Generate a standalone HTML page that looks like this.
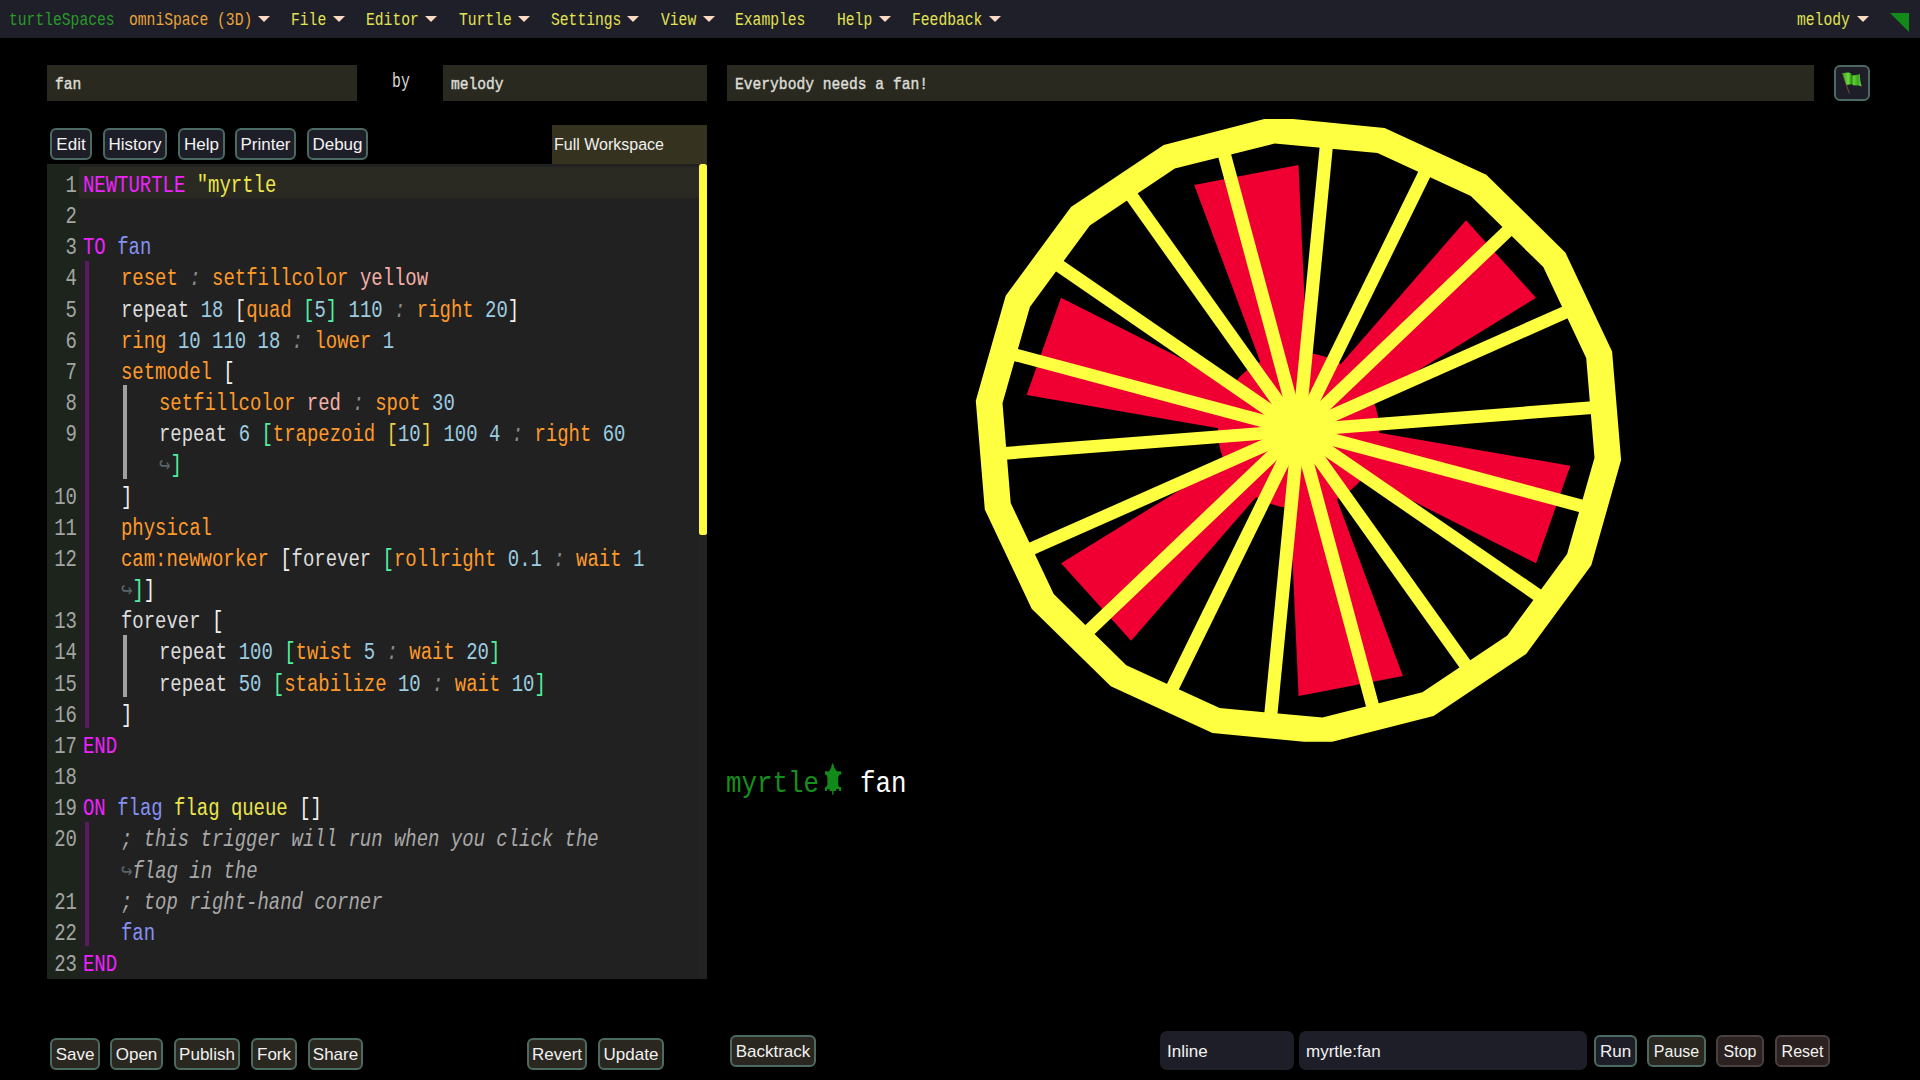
<!DOCTYPE html>
<html><head><meta charset="utf-8"><title>turtleSpaces</title>
<style>
html,body{margin:0;padding:0;background:#000;width:1920px;height:1080px;overflow:hidden;}
body{position:relative;font-family:"Liberation Sans",sans-serif;}
.abs{position:absolute;}
#menubar{position:absolute;left:0;top:0;width:1920px;height:38px;background:#1e1f29;}
.mt{position:absolute;top:1px;height:38px;line-height:38px;font-family:"Liberation Mono",monospace;font-size:18px;transform:scaleX(0.815);transform-origin:0 0;white-space:pre;}
.tri{position:absolute;width:0;height:0;border-left:6px solid transparent;border-right:6px solid transparent;border-top:6.5px solid #fbd9c2;}
.inp{position:absolute;background:#29291f;color:#dcdcd6;font-family:"Liberation Mono",monospace;font-size:17px;white-space:pre;-webkit-text-stroke:0.45px #dcdcd6;}
.inp span{position:absolute;left:8px;top:2px;line-height:36px;transform:scaleX(0.86);transform-origin:0 0;}
.btn{position:absolute;border:2px solid;border-radius:6px;color:#f2f2f2;text-align:center;line-height:30px;white-space:nowrap;}
#editor{position:absolute;left:47px;top:164px;width:660px;height:815px;background:#212121;overflow:hidden;}
#gutter{position:absolute;left:47px;top:164px;width:32px;height:815px;background:#1c241c;}
.ln{position:absolute;right:1843px;width:40px;text-align:right;font-family:"Liberation Mono",monospace;font-size:23px;line-height:0;height:0;color:#a4a4a4;transform:scaleX(0.824);transform-origin:100% 0;white-space:pre;}
.cl{position:absolute;font-family:"Liberation Mono",monospace;font-size:23px;line-height:0;height:0;transform:scaleX(0.824);transform-origin:0 0;white-space:pre;}
.cin{position:absolute;font-family:"Liberation Sans",sans-serif;font-size:17px;color:#f2f2f2;background:#1e1e28;border-radius:7px;}
.cin span{position:absolute;left:7px;top:1px;line-height:39px;}
</style></head><body>
<div id="menubar">
<div class="mt" style="left:8.8px;color:#2a9a2a">turtleSpaces</div>
<div class="mt" style="left:129.3px;color:#eba43c">omniSpace (3D)</div>
<div class="tri" style="left:258.0px;top:16.0px"></div>
<div class="mt" style="left:290.8px;color:#e4e452">File</div>
<div class="tri" style="left:333.0px;top:16.0px"></div>
<div class="mt" style="left:366.3px;color:#e4e452">Editor</div>
<div class="tri" style="left:425.0px;top:16.0px"></div>
<div class="mt" style="left:458.8px;color:#e4e452">Turtle</div>
<div class="tri" style="left:518.2px;top:16.0px"></div>
<div class="mt" style="left:550.8px;color:#e4e452">Settings</div>
<div class="tri" style="left:627.0px;top:16.0px"></div>
<div class="mt" style="left:660.8px;color:#e4e452">View</div>
<div class="tri" style="left:702.5px;top:16.0px"></div>
<div class="mt" style="left:735.3px;color:#e4e452">Examples</div>
<div class="mt" style="left:837.3px;color:#e4e452">Help</div>
<div class="tri" style="left:879.3px;top:16.0px"></div>
<div class="mt" style="left:912.3px;color:#e4e452">Feedback</div>
<div class="tri" style="left:989.2px;top:16.0px"></div>
<div class="mt" style="left:1797.3px;color:#e4e452">melody</div>
<div class="tri" style="left:1857.0px;top:16.0px"></div>
<svg class="abs" style="left:0;top:0" width="1920" height="38"><polygon points="1890,13 1909,13 1909,32" fill="#128a1a"/></svg>
</div>
<div class="inp" style="left:47px;top:65px;width:310px;height:36px"><span>fan</span></div>
<div class="abs" style="left:391.5px;top:64px;line-height:36px;font-family:'Liberation Mono',monospace;font-size:20px;color:#d8d8d8;transform:scaleX(0.74);transform-origin:0 0">by</div>
<div class="inp" style="left:443px;top:65px;width:264px;height:36px"><span>melody</span></div>
<div class="inp" style="left:727px;top:65px;width:1087px;height:36px"><span>Everybody needs a fan!</span></div>
<div class="abs" style="left:1834px;top:65px;width:32px;height:32px;border:2px solid #4b6b62;border-radius:6px;background:#1e1e28">
<svg width="32" height="32" style="position:absolute;left:0;top:0"><defs><linearGradient id="fg" x1="0" x2="1" y1="0" y2="0"><stop offset="0" stop-color="#3aa820"/><stop offset="0.3" stop-color="#6ada3a"/><stop offset="0.47" stop-color="#2a8a18"/><stop offset="0.58" stop-color="#62d236"/><stop offset="0.8" stop-color="#3b9e22"/><stop offset="1" stop-color="#7ae444"/></linearGradient></defs><line x1="6.4" y1="6.2" x2="13.3" y2="26.3" stroke="#7a5236" stroke-width="1"/><path d="M6.7,6.2 C9,5.6 11,5.4 12.6,5.5 L14.8,6.2 L16.2,8.4 C19,8.4 21.5,7.6 23.9,7.3 C23.8,11 24.2,15 25.7,19.4 C24.5,18.8 23.2,18.6 22.1,18.6 L17,18.3 L16.2,17.2 C14.5,17.3 12.5,17.6 10.6,17.9 Z" fill="url(#fg)"/></svg>
</div>
<div class="btn" style="left:50px;top:128px;width:38px;height:28px;background:#1e1e28;border-color:#4b6b62;font-size:17px">Edit</div>
<div class="btn" style="left:103px;top:128px;width:60px;height:28px;background:#1e1e28;border-color:#4b6b62;font-size:17px">History</div>
<div class="btn" style="left:178px;top:128px;width:43px;height:28px;background:#1e1e28;border-color:#4b6b62;font-size:17px">Help</div>
<div class="btn" style="left:235px;top:128px;width:57px;height:28px;background:#1e1e28;border-color:#4b6b62;font-size:17px">Printer</div>
<div class="btn" style="left:307px;top:128px;width:57px;height:28px;background:#1e1e28;border-color:#4b6b62;font-size:17px">Debug</div>
<div class="btn" style="left:50px;top:1038px;width:46px;height:28px;background:#29271f;border-color:#4b6b62;font-size:17px">Save</div>
<div class="btn" style="left:110px;top:1038px;width:49px;height:28px;background:#29271f;border-color:#4b6b62;font-size:17px">Open</div>
<div class="btn" style="left:174px;top:1038px;width:62px;height:28px;background:#29271f;border-color:#4b6b62;font-size:17px">Publish</div>
<div class="btn" style="left:251px;top:1038px;width:42px;height:28px;background:#29271f;border-color:#4b6b62;font-size:17px">Fork</div>
<div class="btn" style="left:308px;top:1038px;width:51px;height:28px;background:#29271f;border-color:#4b6b62;font-size:17px">Share</div>
<div class="btn" style="left:527px;top:1038px;width:56px;height:28px;background:#29271f;border-color:#4b6b62;font-size:17px">Revert</div>
<div class="btn" style="left:598px;top:1038px;width:62px;height:28px;background:#29271f;border-color:#4b6b62;font-size:17px">Update</div>
<div class="btn" style="left:730px;top:1035px;width:82px;height:28px;background:#29271f;border-color:#4b6b62;font-size:17px">Backtrack</div>
<div class="btn" style="left:1594px;top:1035px;width:39px;height:28px;background:#1e1e28;border-color:#4b6b62;font-size:17px">Run</div>
<div class="btn" style="left:1647px;top:1035px;width:55px;height:28px;background:#29271f;border-color:#4b6b62;font-size:16px">Pause</div>
<div class="btn" style="left:1716px;top:1035px;width:44px;height:28px;background:#2a2120;border-color:#4a4040;font-size:16px">Stop</div>
<div class="btn" style="left:1775px;top:1035px;width:51px;height:28px;background:#2a2120;border-color:#4a4040;font-size:16px">Reset</div>
<div class="abs" style="left:552px;top:125px;width:155px;height:39px;background:#35331f;color:#f0f0f0;font-size:16px;line-height:39px;text-indent:2px">Full Workspace</div>
<div id="editor"></div>
<div id="gutter"></div>
<div class="abs" style="left:79px;top:167.3px;width:620px;height:31.2px;background:#2a2a22"></div>
<div class="abs" style="left:699px;top:164px;width:8px;height:815px;background:#232323"></div>
<div class="abs" style="left:699px;top:164px;width:8px;height:371px;background:#fdfc3f;border-radius:2.5px"></div>
<div class="ln" style="top:186.00px">1</div>
<div class="cl" style="top:186.00px;left:83px"><span style="color:#ee22ff">NEWTURTLE</span><span style="color:#dcdcdc"> </span><span style="color:#ece64c">&quot;myrtle</span></div>
<div class="ln" style="top:217.16px">2</div>
<div class="ln" style="top:248.32px">3</div>
<div class="cl" style="top:248.32px;left:83px"><span style="color:#ee22ff">TO</span><span style="color:#dcdcdc"> </span><span style="color:#8592f2">fan</span></div>
<div class="ln" style="top:279.48px">4</div>
<div class="cl" style="top:279.48px;left:121px"><span style="color:#ff9a2a">reset</span><span style="color:#dcdcdc"> </span><span style="color:#8a8a8a;font-style:italic">:</span><span style="color:#dcdcdc"> </span><span style="color:#ff9a2a">setfillcolor</span><span style="color:#dcdcdc"> </span><span style="color:#f4b0a8">yellow</span></div>
<div class="ln" style="top:310.64px">5</div>
<div class="cl" style="top:310.64px;left:121px"><span style="color:#dcdcdc">repeat</span><span style="color:#dcdcdc"> </span><span style="color:#9ccce0">18</span><span style="color:#dcdcdc"> </span><span style="color:#f0f0f0">[</span><span style="color:#ff9a2a">quad</span><span style="color:#dcdcdc"> </span><span style="color:#50f0a0">[</span><span style="color:#9ccce0">5</span><span style="color:#50f0a0">]</span><span style="color:#dcdcdc"> </span><span style="color:#9ccce0">110</span><span style="color:#dcdcdc"> </span><span style="color:#8a8a8a;font-style:italic">:</span><span style="color:#dcdcdc"> </span><span style="color:#ff9a2a">right</span><span style="color:#dcdcdc"> </span><span style="color:#9ccce0">20</span><span style="color:#f0f0f0">]</span></div>
<div class="ln" style="top:341.80px">6</div>
<div class="cl" style="top:341.80px;left:121px"><span style="color:#ff9a2a">ring</span><span style="color:#dcdcdc"> </span><span style="color:#9ccce0">10</span><span style="color:#dcdcdc"> </span><span style="color:#9ccce0">110</span><span style="color:#dcdcdc"> </span><span style="color:#9ccce0">18</span><span style="color:#dcdcdc"> </span><span style="color:#8a8a8a;font-style:italic">:</span><span style="color:#dcdcdc"> </span><span style="color:#ff9a2a">lower</span><span style="color:#dcdcdc"> </span><span style="color:#9ccce0">1</span></div>
<div class="ln" style="top:372.96px">7</div>
<div class="cl" style="top:372.96px;left:121px"><span style="color:#ff9a2a">setmodel</span><span style="color:#dcdcdc"> </span><span style="color:#f0f0f0">[</span></div>
<div class="ln" style="top:404.12px">8</div>
<div class="cl" style="top:404.12px;left:159px"><span style="color:#ff9a2a">setfillcolor</span><span style="color:#dcdcdc"> </span><span style="color:#f4b0a8">red</span><span style="color:#dcdcdc"> </span><span style="color:#8a8a8a;font-style:italic">:</span><span style="color:#dcdcdc"> </span><span style="color:#ff9a2a">spot</span><span style="color:#dcdcdc"> </span><span style="color:#9ccce0">30</span></div>
<div class="ln" style="top:435.28px">9</div>
<div class="cl" style="top:435.28px;left:159px"><span style="color:#dcdcdc">repeat</span><span style="color:#dcdcdc"> </span><span style="color:#9ccce0">6</span><span style="color:#dcdcdc"> </span><span style="color:#50f0a0">[</span><span style="color:#ff9a2a">trapezoid</span><span style="color:#dcdcdc"> </span><span style="color:#f0d040">[</span><span style="color:#9ccce0">10</span><span style="color:#f0d040">]</span><span style="color:#dcdcdc"> </span><span style="color:#9ccce0">100</span><span style="color:#dcdcdc"> </span><span style="color:#9ccce0">4</span><span style="color:#dcdcdc"> </span><span style="color:#8a8a8a;font-style:italic">:</span><span style="color:#dcdcdc"> </span><span style="color:#ff9a2a">right</span><span style="color:#dcdcdc"> </span><span style="color:#9ccce0">60</span></div>
<div class="cl" style="top:466.44px;left:159px"><span style="color:#56666c">↪</span><span style="color:#50f0a0">]</span></div>
<div class="ln" style="top:497.60px">10</div>
<div class="cl" style="top:497.60px;left:121px"><span style="color:#f0f0f0">]</span></div>
<div class="ln" style="top:528.76px">11</div>
<div class="cl" style="top:528.76px;left:121px"><span style="color:#ff9a2a">physical</span></div>
<div class="ln" style="top:559.92px">12</div>
<div class="cl" style="top:559.92px;left:121px"><span style="color:#ff9a2a">cam:newworker</span><span style="color:#dcdcdc"> </span><span style="color:#f0f0f0">[</span><span style="color:#dcdcdc">forever</span><span style="color:#dcdcdc"> </span><span style="color:#50f0a0">[</span><span style="color:#ff9a2a">rollright</span><span style="color:#dcdcdc"> </span><span style="color:#9ccce0">0.1</span><span style="color:#dcdcdc"> </span><span style="color:#8a8a8a;font-style:italic">:</span><span style="color:#dcdcdc"> </span><span style="color:#ff9a2a">wait</span><span style="color:#dcdcdc"> </span><span style="color:#9ccce0">1</span></div>
<div class="cl" style="top:591.08px;left:121px"><span style="color:#56666c">↪</span><span style="color:#50f0a0">]</span><span style="color:#f0f0f0">]</span></div>
<div class="ln" style="top:622.24px">13</div>
<div class="cl" style="top:622.24px;left:121px"><span style="color:#dcdcdc">forever</span><span style="color:#dcdcdc"> </span><span style="color:#f0f0f0">[</span></div>
<div class="ln" style="top:653.40px">14</div>
<div class="cl" style="top:653.40px;left:159px"><span style="color:#dcdcdc">repeat</span><span style="color:#dcdcdc"> </span><span style="color:#9ccce0">100</span><span style="color:#dcdcdc"> </span><span style="color:#50f0a0">[</span><span style="color:#ff9a2a">twist</span><span style="color:#dcdcdc"> </span><span style="color:#9ccce0">5</span><span style="color:#dcdcdc"> </span><span style="color:#8a8a8a;font-style:italic">:</span><span style="color:#dcdcdc"> </span><span style="color:#ff9a2a">wait</span><span style="color:#dcdcdc"> </span><span style="color:#9ccce0">20</span><span style="color:#50f0a0">]</span></div>
<div class="ln" style="top:684.56px">15</div>
<div class="cl" style="top:684.56px;left:159px"><span style="color:#dcdcdc">repeat</span><span style="color:#dcdcdc"> </span><span style="color:#9ccce0">50</span><span style="color:#dcdcdc"> </span><span style="color:#50f0a0">[</span><span style="color:#ff9a2a">stabilize</span><span style="color:#dcdcdc"> </span><span style="color:#9ccce0">10</span><span style="color:#dcdcdc"> </span><span style="color:#8a8a8a;font-style:italic">:</span><span style="color:#dcdcdc"> </span><span style="color:#ff9a2a">wait</span><span style="color:#dcdcdc"> </span><span style="color:#9ccce0">10</span><span style="color:#50f0a0">]</span></div>
<div class="ln" style="top:715.72px">16</div>
<div class="cl" style="top:715.72px;left:121px"><span style="color:#f0f0f0">]</span></div>
<div class="ln" style="top:746.88px">17</div>
<div class="cl" style="top:746.88px;left:83px"><span style="color:#ee22ff">END</span></div>
<div class="ln" style="top:778.04px">18</div>
<div class="ln" style="top:809.20px">19</div>
<div class="cl" style="top:809.20px;left:83px"><span style="color:#ee22ff">ON</span><span style="color:#dcdcdc"> </span><span style="color:#8592f2">flag</span><span style="color:#dcdcdc"> </span><span style="color:#ece64c">flag queue</span><span style="color:#dcdcdc"> </span><span style="color:#f0f0f0">[]</span></div>
<div class="ln" style="top:840.36px">20</div>
<div class="cl" style="top:840.36px;left:121px"><span style="color:#a8a8a8;font-style:italic">; this trigger will run when you click the</span></div>
<div class="cl" style="top:871.52px;left:121px"><span style="color:#56666c">↪</span><span style="color:#a8a8a8;font-style:italic">flag in the</span></div>
<div class="ln" style="top:902.68px">21</div>
<div class="cl" style="top:902.68px;left:121px"><span style="color:#a8a8a8;font-style:italic">; top right-hand corner</span></div>
<div class="ln" style="top:933.84px">22</div>
<div class="cl" style="top:933.84px;left:121px"><span style="color:#8592f2">fan</span></div>
<div class="ln" style="top:965.00px">23</div>
<div class="cl" style="top:965.00px;left:83px"><span style="color:#ee22ff">END</span></div>
<div style="position:absolute;left:85px;top:260.8px;width:4px;height:467.4px;background:#5c1a62"></div>
<div style="position:absolute;left:85px;top:821.7px;width:4px;height:124.6px;background:#5c1a62"></div>
<div style="position:absolute;left:123px;top:385.4px;width:4px;height:93.5px;background:#a0a0a0"></div>
<div style="position:absolute;left:123px;top:634.7px;width:4px;height:62.3px;background:#a0a0a0"></div>
<svg class="abs" style="left:0;top:0" width="1920" height="1080">
<polygon fill="#f00032" points="1379.0,424.2 1379.3,432.4 1378.6,440.6 1377.1,448.6 1374.7,456.5 1371.5,464.0 1367.5,471.2 1362.7,478.0 1357.2,484.2 1351.1,489.8 1344.4,494.8 1337.2,499.1 1329.6,502.6 1321.6,505.4 1313.4,507.3 1305.1,508.4 1296.6,508.6 1288.2,508.0 1279.9,506.5 1271.8,504.2 1264.0,501.1 1256.5,497.2 1249.6,492.6 1243.1,487.2 1237.3,481.3 1232.1,474.8 1227.7,467.9 1224.1,460.5 1221.2,452.8 1219.3,444.8 1218.1,436.7 1217.9,428.6 1218.5,420.4 1220.1,412.4 1222.5,404.5 1225.7,396.9 1229.7,389.8 1234.5,383.0 1239.9,376.8 1246.1,371.1 1252.8,366.2 1260.0,361.9 1267.6,358.3 1275.5,355.6 1283.7,353.7 1292.1,352.6 1300.6,352.4 1309.0,353.0 1317.3,354.5 1325.4,356.8 1333.2,359.9 1340.6,363.8 1347.6,368.4 1354.0,373.7 1359.9,379.7 1365.0,386.1 1369.4,393.1 1373.1,400.5 1375.9,408.2 1377.9,416.1"/>
<polygon fill="#f00032" points="1286.8,432.7 1194.2,184.9 1298.5,165.0 1310.3,428.2"/>
<polygon fill="#f00032" points="1290.7,421.7 1466.0,220.3 1535.9,297.8 1306.5,439.2"/>
<polygon fill="#f00032" points="1302.4,419.5 1570.3,465.8 1536.0,563.2 1294.7,441.5"/>
<polygon fill="#f00032" points="1310.3,428.2 1402.9,676.0 1298.6,696.0 1286.8,432.7"/>
<polygon fill="#f00032" points="1306.5,439.2 1131.1,640.7 1061.1,563.3 1290.7,421.7"/>
<polygon fill="#f00032" points="1294.7,441.5 1026.7,395.1 1061.0,297.7 1302.4,419.5"/>
<polygon fill="#ffff42" points="1291.6,424.6 1604.9,400.3 1605.9,413.0 1292.6,437.3"/>
<polygon fill="#ffff42" points="1294.1,422.7 1597.1,503.6 1593.6,515.9 1290.6,435.0"/>
<polygon fill="#ffff42" points="1297.1,421.7 1553.3,598.0 1545.7,608.4 1289.5,432.0"/>
<polygon fill="#ffff42" points="1300.3,421.7 1478.8,672.3 1468.0,679.5 1289.5,428.9"/>
<polygon fill="#ffff42" points="1303.3,422.8 1382.5,717.4 1369.8,720.6 1290.6,426.0"/>
<polygon fill="#ffff42" points="1305.7,424.8 1276.1,727.9 1263.0,726.7 1292.6,423.6"/>
<polygon fill="#ffff42" points="1307.3,427.6 1172.4,702.5 1160.5,697.1 1295.4,422.1"/>
<polygon fill="#ffff42" points="1307.8,430.6 1083.9,644.3 1074.7,635.3 1298.6,421.5"/>
<polygon fill="#ffff42" points="1307.2,433.7 1021.3,560.3 1015.8,548.7 1301.7,422.1"/>
<polygon fill="#ffff42" points="1305.6,436.3 992.1,460.7 991.1,448.0 1304.5,423.6"/>
<polygon fill="#ffff42" points="1303.1,438.3 999.9,357.3 1003.4,345.1 1306.6,426.0"/>
<polygon fill="#ffff42" points="1300.1,439.3 1043.8,262.9 1051.4,252.5 1307.7,428.9"/>
<polygon fill="#ffff42" points="1296.8,439.3 1118.3,188.6 1129.2,181.4 1307.7,432.0"/>
<polygon fill="#ffff42" points="1293.8,438.2 1214.6,143.6 1227.4,140.4 1306.6,435.0"/>
<polygon fill="#ffff42" points="1291.4,436.1 1321.0,133.1 1334.1,134.3 1304.5,437.3"/>
<polygon fill="#ffff42" points="1289.9,433.4 1424.7,158.6 1436.6,164.0 1301.7,438.9"/>
<polygon fill="#ffff42" points="1289.3,430.4 1513.1,216.8 1522.4,225.8 1298.6,439.4"/>
<polygon fill="#ffff42" points="1289.9,427.3 1575.7,300.7 1581.2,312.3 1295.4,438.9"/>
<path fill="#ffff42" fill-rule="evenodd" d="M1264.3,118.9 L1292.9,118.9 L1384.6,128.0 L1486.3,174.8 L1565.3,252.4 L1612.1,351.5 L1621.1,460.1 L1591.3,565.2 L1526.1,654.0 L1433.5,715.9 L1332.2,741.7 L1303.9,741.7 L1212.5,733.1 L1110.8,686.3 L1031.7,608.7 L984.8,509.5 L975.8,400.8 L1005.7,295.8 L1071.0,206.9 L1163.7,145.1 Z M1274.7,143.5 L1377.5,153.0 L1470.8,195.9 L1543.3,267.1 L1586.2,358.0 L1594.5,457.7 L1567.1,554.0 L1507.3,635.5 L1422.4,692.3 L1322.4,717.5 L1219.6,708.1 L1126.3,665.2 L1053.7,594.0 L1010.7,503.0 L1002.5,403.3 L1029.9,306.9 L1089.8,225.4 L1174.8,168.6 Z"/>
</svg>
<div class="abs" style="left:726px;top:784px;font-family:'Liberation Mono',monospace;font-size:30px;line-height:0;height:0;color:#14901c;white-space:pre;transform:scaleX(0.86);transform-origin:0 0">myrtle</div>
<svg class="abs" style="left:818px;top:760px" width="30" height="38"><path fill="#128a1a" d="M14.6,3.0 L15.8,5.5 L16.3,7.5 L18.2,10.6 L19.5,11.4 L21.1,11.4 L21.1,11.2 L23.1,11.2 L23.1,14.8 L21.3,14.8 L20.2,17.5 L20.2,25.0 L21.3,27.0 L23.1,27.0 L23.1,31.0 L21.1,31.0 L21.1,29.0 L18.2,29.0 L18.2,31.0 L15.4,31.0 L15.4,34.7 L14.1,34.7 L14.1,31.0 L11.4,31.0 L11.4,29.0 L9.0,29.0 L9.0,31.0 L7.0,31.0 L7.0,27.0 L8.3,27.0 L9.4,25.0 L9.4,17.5 L8.5,14.8 L7.0,14.8 L7.0,11.2 L9.0,11.2 L9.0,11.4 L10.4,11.4 L11.6,10.6 L13.2,7.5 L13.5,5.5Z"/></svg>
<div class="abs" style="left:860px;top:784px;font-family:'Liberation Mono',monospace;font-size:30px;line-height:0;height:0;color:#ffffff;white-space:pre;transform:scaleX(0.86);transform-origin:0 0">fan</div>
<div class="cin" style="left:1160px;top:1031px;width:134px;height:39px"><span>Inline</span></div>
<div class="cin" style="left:1299px;top:1031px;width:288px;height:39px"><span>myrtle:fan</span></div>
</body></html>
